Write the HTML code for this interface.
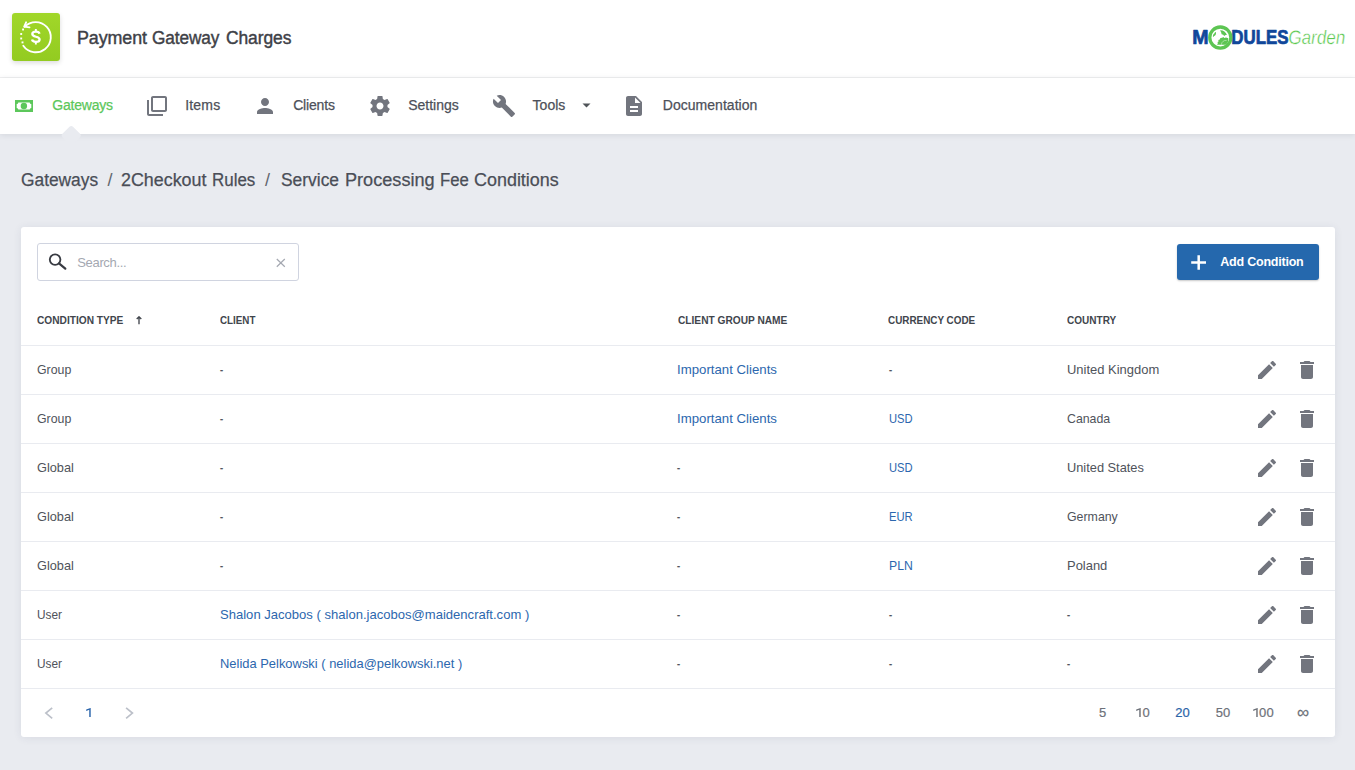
<!DOCTYPE html>
<html>
<head>
<meta charset="utf-8">
<title>Payment Gateway Charges</title>
<style>
*{box-sizing:border-box;margin:0;padding:0}
html,body{width:1355px;height:770px;overflow:hidden}
body{background:#e9ebf0;font-family:"Liberation Sans",sans-serif;color:#505459;position:relative;font-size:13px}
.abs{position:absolute;white-space:nowrap}
#header{position:absolute;left:0;top:0;width:1355px;height:78px;background:#fff;border-bottom:1px solid #f0f0f1}
#logo{position:absolute;left:12px;top:13px;width:48px;height:48px;border-radius:3px;background:linear-gradient(#a1d729,#93cb21);box-shadow:0 2px 5px rgba(0,0,0,.14)}
.tt{top:27px;font-size:18px;color:#3e4147;line-height:22px;letter-spacing:-0.1px;-webkit-text-stroke:0.42px #3e4147;transform-origin:0 50%}
#nav{position:absolute;left:0;top:78px;width:1355px;height:56px;background:#fff;box-shadow:0 1px 6px rgba(30,35,60,.10)}
.nv{position:absolute;top:96px;font-size:14px;line-height:18px;color:#4d5059;white-space:nowrap;-webkit-text-stroke:0.25px currentColor}
.nv.act{color:#5cc75b}
.ico{position:absolute}
#tri{position:absolute;left:63.750px;top:127.750px;width:14.500px;height:14.500px;background:#e9ebf0;border-radius:2.500px;transform:rotate(45deg)}
#clip{position:absolute;left:0;top:78px;width:1355px;height:70px;overflow:hidden;pointer-events:none}
.cr{transform-origin:0 50%;top:168px;font-size:18px;line-height:24px;color:#4a4e57;-webkit-text-stroke:0.25px currentColor}
.cr.sep{color:#62666e;-webkit-text-stroke:0}
#card{position:absolute;left:20px;top:227px;width:1315px;height:510px}
#cbg{position:absolute;left:0.800px;top:0;width:1314.200px;height:510px;background:#fff;border-radius:3px;box-shadow:0 1px 8px rgba(45,55,90,.085)}
.ln{position:absolute;left:1px;width:1314px;height:1px;background:#e9ebf0}
#search{position:absolute;left:17px;top:16px;width:262px;height:38px;border:1px solid #d0d4e0;border-radius:3px;background:#fff}
#search .ph{position:absolute;left:39.300px;top:10.500px;font-size:13px;line-height:16px;color:#a4a8b1;letter-spacing:-0.35px}
#btn{position:absolute;left:1157px;top:17px;width:142px;height:36px;background:#2568ad;border-radius:3px;box-shadow:0 1px 2px rgba(0,0,0,.22);color:#fff;font-weight:bold;font-size:12.500px}
#btn span{position:absolute;left:43.300px;top:11px;line-height:15px;letter-spacing:-0.22px}
.th{position:absolute;top:86px;font-size:10.5px;line-height:14px;font-weight:bold;color:#41454c;white-space:nowrap;transform-origin:0 50%}
.row{position:absolute;left:0;width:1315px;height:49px}
.row div{position:absolute;top:17px;font-size:13px;line-height:16px;color:#4f535b;white-space:nowrap;transform-origin:0 50%}
.row div.lk{color:#2c67ae}
.row div.ds{-webkit-text-stroke:0.35px currentColor}
.c1{left:17.300px}.c2{left:199.700px}.c3{left:657.200px}.c4{left:868.600px}.c5{left:1047.200px}
#foot{position:absolute;left:0;top:461px;width:1315px;height:49px}
#foot div{position:absolute;top:17px;font-size:13px;line-height:16px;color:#6d7179;-webkit-text-stroke:0.2px currentColor;white-space:nowrap;text-align:center}
#foot div.on{color:#2a64a8}
</style>
</head>
<body>
<div id="header">
  <div id="logo">
    <svg width="48" height="48" viewBox="0 0 48 48">
      <path d="M12.66 13.85 A15.1 15.1 0 1 1 11.29 32.75" fill="none" stroke="#fff" stroke-width="1.85" stroke-linecap="round"/>
      <rect x="10.11" y="15.55" width="1.9" height="1.9" fill="#fff"/><rect x="8.25" y="20.05" width="1.9" height="1.9" fill="#fff"/><rect x="8.25" y="24.55" width="1.9" height="1.9" fill="#fff"/><rect x="9.55" y="28.45" width="1.9" height="1.9" fill="#fff"/>
      <path d="M14.1 9.3 L12.2 13.6 L17.5 14.4" fill="none" stroke="#fff" stroke-width="1.85" stroke-linecap="round" stroke-linejoin="round"/>
      <path d="M27.5 20.700 C27.200 19.300 25.800 18.600 23.900 18.600 C21.800 18.600 20.300 19.600 20.300 21.100 C20.300 22.600 21.600 23.200 23.900 23.750 C26.400 24.300 27.600 25 27.600 26.450 C27.600 27.950 26.100 28.850 23.900 28.850 C21.800 28.850 20.350 28 20.050 26.600" fill="none" stroke="#fff" stroke-width="2.3"/><path d="M23.85 15.900 V18.600 M23.85 28.900 V31.600" stroke="#fff" stroke-width="1.9"/>
    </svg>
  </div>
  <div id="w_t1" class="abs tt" style="left:76.600px;transform:scaleX(0.9930)">Payment</div><div id="w_t2" class="abs tt" style="left:152.200px;transform:scaleX(0.9560)">Gateway</div><div id="w_t3" class="abs tt" style="left:225.800px;transform:scaleX(0.9692)">Charges</div>
  <svg class="ico" style="left:1190px;top:22px" width="160" height="32" viewBox="0 0 160 32">
    <defs><clipPath id="gc"><circle cx="30.300" cy="15.550" r="9"/></clipPath></defs>
    <g font-family="Liberation Sans, sans-serif" font-weight="bold" font-size="19.300" fill="#10479a" stroke="#10479a" stroke-width="0.700" stroke-linejoin="round">
      <text x="2.300" y="22" textLength="16.300" lengthAdjust="spacingAndGlyphs">M</text>
      <text x="41.300" y="22" textLength="57.200" lengthAdjust="spacingAndGlyphs">DULES</text>
    </g>
    <circle cx="30.300" cy="15.550" r="10.550" fill="#fff" stroke="#5dc553" stroke-width="3.300"/>
    <g clip-path="url(#gc)" fill="#5dc553">
      <path d="M25.200 9.900 L26.100 10.600 L25.800 12.600 L25.100 13.600 L24.200 14 L23.400 15 L22.800 14.200 L23.300 12.400 L24.300 11.600z"/>
      <path d="M30.100 8.200 L32.600 8.400 L34.400 9.600 L36 11.200 L36.900 12.900 L35.600 13 L34.200 13.900 L33.200 12.800 L31.600 12.200 L31.200 10.400z"/>
      <path d="M30.400 16 L32.200 15.800 L33.300 15 L34.300 16 L36 15.600 L38.300 16.200 L38 22.700 L27 22.700 L27.800 21.400 L27.600 20 L28.600 19.400 L28.300 18 L29.800 17.600z"/>
      <path d="M31.400 22.700 A4.300 4.300 0 0 1 36.600 18.500" fill="none" stroke="#fff" stroke-width="0.600" opacity=".7"/>
    </g>
    <text x="98.600" y="22" transform="translate(0,22) skewX(1.5) translate(0,-22)" font-family="Liberation Sans, sans-serif" font-style="italic" font-size="19.500" fill="#5ac84e" stroke="#fff" stroke-width="0.400" textLength="56.800" lengthAdjust="spacingAndGlyphs">Garden</text>
  </svg>
</div>
<div id="nav"></div>

<!-- nav icons -->
<svg class="ico" style="left:15px;top:100px" width="18" height="12" viewBox="0 0 18 12"><rect x="0" y="0" width="18" height="12" fill="#5cc75b"/><path d="M3.3 2.4 H14.7 A1.6 1.6 0 0 0 16.3 4 V8 A1.6 1.6 0 0 0 14.7 9.600 H3.3 A1.6 1.6 0 0 0 1.7 8 V4 A1.6 1.6 0 0 0 3.3 2.4z" fill="#fff"/><circle cx="8.9" cy="6" r="3.200" fill="#5cc75b"/></svg>
<div class="nv act" style="left:52.3px;letter-spacing:-0.22px">Gateways</div>
<div id="tri"></div>

<svg class="ico" style="left:145px;top:94px" width="24" height="24" viewBox="0 0 24 24"><path d="M4 6H2v14c0 1.1.9 2 2 2h14v-2H4V6zm16-4H8c-1.1 0-2 .9-2 2v12c0 1.1.9 2 2 2h12c1.100 0 2-.9 2-2V4c0-1.100-.9-2-2-2zm0 14H8V4h12v12z" fill="#72757e"/></svg>
<div class="nv" style="left:185.2px;letter-spacing:0.18px">Items</div>

<svg class="ico" style="left:252.600px;top:94px" width="24" height="24" viewBox="0 0 24 24"><path d="M12 12c2.210 0 4-1.790 4-4s-1.790-4-4-4-4 1.790-4 4 1.790 4 4 4zm0 2c-2.670 0-8 1.340-8 4v2h16v-2c0-2.660-5.330-4-8-4z" fill="#72757e"/></svg>
<div class="nv" style="left:293.2px;letter-spacing:-0.18px">Clients</div>

<svg class="ico" style="left:368px;top:94px" width="24" height="24" viewBox="0 0 24 24"><path d="M19.430 12.980c.040-.320.070-.640.070-.980s-.030-.660-.070-.980l2.110-1.650c.190-.150.240-.420.120-.640l-2-3.460c-.120-.220-.390-.300-.610-.220l-2.490 1c-.520-.400-1.080-.730-1.690-.980l-.380-2.650C14.460 2.180 14.250 2 14 2h-4c-.250 0-.460.180-.490.420l-.380 2.650c-.610.250-1.170.590-1.690.980l-2.490-1c-.230-.090-.490 0-.610.220l-2 3.460c-.130.220-.070.490.12.640l2.110 1.650c-.040.320-.070.650-.070.980s.030.660.070.980l-2.110 1.650c-.190.150-.240.420-.12.640l2 3.460c.120.220.390.300.610.220l2.490-1c.520.400 1.080.730 1.690.980l.380 2.650c.030.240.240.420.490.420h4c.250 0 .460-.180.490-.420l.380-2.650c.610-.250 1.170-.590 1.690-.980l2.490 1c.230.090.490 0 .610-.220l2-3.460c.120-.220.070-.490-.12-.640l-2.110-1.650zM12 15.500c-1.930 0-3.500-1.570-3.500-3.500s1.570-3.500 3.500-3.500 3.500 1.570 3.500 3.500-1.570 3.500-3.500 3.500z" fill="#72757e"/></svg>
<div class="nv" style="left:408.2px">Settings</div>

<svg class="ico" style="left:492px;top:94px" width="24" height="24" viewBox="0 0 24 24"><path d="M22.700 19l-9.100-9.100c.9-2.300.4-5-1.500-6.900-2-2-5-2.400-7.400-1.300L9 6 6 9 1.600 4.700C.4 7.100.9 10.100 2.900 12.100c1.900 1.900 4.600 2.400 6.900 1.500l9.100 9.100c.4.400 1 .4 1.400 0l2.300-2.300c.5-.4.500-1.100.1-1.400z" fill="#72757e"/></svg>
<div class="nv" style="left:532.6px">Tools</div>
<svg class="ico" style="left:582px;top:103px" width="9" height="5" viewBox="0 0 9 5"><path d="M0.500 0.500h8L4.500 4.500z" fill="#505459"/></svg>

<svg class="ico" style="left:622px;top:94px" width="24" height="24" viewBox="0 0 24 24"><path d="M14 2H6c-1.100 0-1.990.9-1.990 2L4 20c0 1.100.890 2 1.990 2H18c1.100 0 2-.9 2-2V8l-6-6zm2 16H8v-2h8v2zm0-4H8v-2h8v2zm-3-5V3.500L18.500 9H13z" fill="#72757e"/></svg>
<div class="nv" style="left:662.8px;letter-spacing:0.03px">Documentation</div>

<div id="w_b1" class="abs cr" style="left:20.520px;transform:scaleX(0.9635)">Gateways</div><div class="abs cr sep" style="left:107.500px">/</div><div id="w_b2" class="abs cr" style="left:120.750px;transform:scaleX(0.9932)">2Checkout</div><div id="w_b3" class="abs cr" style="left:212.300px;transform:scaleX(0.9400)">Rules</div><div class="abs cr sep" style="left:265px">/</div><div id="w_b4" class="abs cr" style="left:281.200px;transform:scaleX(0.9668)">Service</div><div id="w_b5" class="abs cr" style="left:344.900px;transform:scaleX(1.0069)">Processing</div><div id="w_b6" class="abs cr" style="left:439.700px;transform:scaleX(0.9300)">Fee</div><div id="w_b7" class="abs cr" style="left:474.200px;transform:scaleX(0.9965)">Conditions</div>

<div id="card">
  <div id="cbg"></div>
  <div class="ln" style="top:118px"></div><div class="ln" style="top:167px"></div><div class="ln" style="top:216px"></div><div class="ln" style="top:265px"></div><div class="ln" style="top:314px"></div><div class="ln" style="top:363px"></div><div class="ln" style="top:412px"></div><div class="ln" style="top:461px"></div>
  <div id="search">
    <svg class="ico" style="left:10px;top:8px" width="20" height="20" viewBox="0 0 20 20"><circle cx="7.100" cy="7.600" r="5.300" fill="none" stroke="#383b42" stroke-width="1.850"/><path d="M11 11.400L17.300 16.700" stroke="#383b42" stroke-width="2.200" stroke-linecap="round"/></svg>
    <div class="ph">Search...</div>
    <svg class="ico" style="left:238px;top:13.500px" width="10" height="10" viewBox="0 0 10 10"><path d="M0.800 1L8.800 8.800M8.800 1L0.800 8.800" stroke="#a4a8b1" stroke-width="1.200"/></svg>
  </div>
  <div id="btn">
    <svg class="ico" style="left:14px;top:10.500px" width="15.400" height="15" viewBox="0 0 15.400 15"><path d="M7.700 0.300v14.400M0.200 7.500h15" stroke="#fff" stroke-width="2.500"/></svg>
    <span>Add Condition</span>
  </div>
  <div class="th" style="left:17.400px;transform:scaleX(.968)">CONDITION TYPE</div>
  <svg class="ico" style="left:116.400px;top:88.800px" width="7" height="9" viewBox="0 0 7 9"><path d="M3 0.700v7.500M0.700 3.100L3 0.800 5.300 3.100" fill="none" stroke="#41454c" stroke-width="1.350"/></svg>
  <div class="th" style="left:199.800px;transform:scaleX(.935)">CLIENT</div>
  <div class="th" style="left:657.700px;transform:scaleX(.968)">CLIENT GROUP NAME</div>
  <div class="th" style="left:868.300px;transform:scaleX(.942)">CURRENCY CODE</div>
  <div class="th" style="left:1047.200px;transform:scaleX(.955)">COUNTRY</div>
  <div class="row" style="top:118px"><div class="c1" style="transform:scaleX(0.95)">Group</div><div class="c2 ds" style="transform:scaleX(0.72)">-</div><div class="c3 lk" style="transform:scaleX(1.017)">Important Clients</div><div class="c4 ds" style="transform:scaleX(0.72)">-</div><div class="c5" style="transform:scaleX(0.997)">United Kingdom</div><svg class="ico" style="left:1235px;top:13px" width="24" height="24" viewBox="0 0 24 24"><path d="M3 17.250V21h3.750L17.810 9.940l-3.750-3.750L3 17.250zM20.710 7.040c.390-.390.390-1.020 0-1.410l-2.340-2.340c-.390-.390-1.020-.390-1.410 0l-1.830 1.830 3.750 3.750 1.830-1.830z" fill="#72757e"/></svg><svg class="ico" style="left:1275px;top:13px" width="24" height="24" viewBox="0 0 24 24"><path d="M6 19c0 1.100.9 2 2 2h8c1.100 0 2-.9 2-2V7H6v12zM19 4h-3.500l-1-1h-5l-1 1H5v2h14V4z" fill="#72757e"/></svg></div>
  <div class="row" style="top:167px"><div class="c1" style="transform:scaleX(0.95)">Group</div><div class="c2 ds" style="transform:scaleX(0.72)">-</div><div class="c3 lk" style="transform:scaleX(1.017)">Important Clients</div><div class="c4 lk" style="transform:scaleX(0.86)">USD</div><div class="c5" style="transform:scaleX(0.948)">Canada</div><svg class="ico" style="left:1235px;top:13px" width="24" height="24" viewBox="0 0 24 24"><path d="M3 17.250V21h3.750L17.810 9.940l-3.750-3.750L3 17.250zM20.710 7.040c.390-.390.390-1.020 0-1.410l-2.340-2.340c-.390-.390-1.020-.390-1.410 0l-1.830 1.830 3.750 3.750 1.830-1.830z" fill="#72757e"/></svg><svg class="ico" style="left:1275px;top:13px" width="24" height="24" viewBox="0 0 24 24"><path d="M6 19c0 1.100.9 2 2 2h8c1.100 0 2-.9 2-2V7H6v12zM19 4h-3.500l-1-1h-5l-1 1H5v2h14V4z" fill="#72757e"/></svg></div>
  <div class="row" style="top:216px"><div class="c1" style="transform:scaleX(0.98)">Global</div><div class="c2 ds" style="transform:scaleX(0.72)">-</div><div class="c3 ds" style="transform:scaleX(0.72)">-</div><div class="c4 lk" style="transform:scaleX(0.86)">USD</div><div class="c5" style="transform:scaleX(0.985)">United States</div><svg class="ico" style="left:1235px;top:13px" width="24" height="24" viewBox="0 0 24 24"><path d="M3 17.250V21h3.750L17.810 9.940l-3.750-3.750L3 17.250zM20.710 7.040c.390-.390.390-1.020 0-1.410l-2.340-2.340c-.390-.390-1.020-.390-1.410 0l-1.830 1.830 3.750 3.750 1.830-1.830z" fill="#72757e"/></svg><svg class="ico" style="left:1275px;top:13px" width="24" height="24" viewBox="0 0 24 24"><path d="M6 19c0 1.100.9 2 2 2h8c1.100 0 2-.9 2-2V7H6v12zM19 4h-3.500l-1-1h-5l-1 1H5v2h14V4z" fill="#72757e"/></svg></div>
  <div class="row" style="top:265px"><div class="c1" style="transform:scaleX(0.98)">Global</div><div class="c2 ds" style="transform:scaleX(0.72)">-</div><div class="c3 ds" style="transform:scaleX(0.72)">-</div><div class="c4 lk" style="transform:scaleX(0.863)">EUR</div><div class="c5" style="transform:scaleX(0.95)">Germany</div><svg class="ico" style="left:1235px;top:13px" width="24" height="24" viewBox="0 0 24 24"><path d="M3 17.250V21h3.750L17.810 9.940l-3.750-3.750L3 17.250zM20.710 7.040c.390-.390.390-1.020 0-1.410l-2.340-2.340c-.390-.390-1.020-.390-1.410 0l-1.830 1.830 3.750 3.750 1.830-1.830z" fill="#72757e"/></svg><svg class="ico" style="left:1275px;top:13px" width="24" height="24" viewBox="0 0 24 24"><path d="M6 19c0 1.100.9 2 2 2h8c1.100 0 2-.9 2-2V7H6v12zM19 4h-3.500l-1-1h-5l-1 1H5v2h14V4z" fill="#72757e"/></svg></div>
  <div class="row" style="top:314px"><div class="c1" style="transform:scaleX(0.98)">Global</div><div class="c2 ds" style="transform:scaleX(0.72)">-</div><div class="c3 ds" style="transform:scaleX(0.72)">-</div><div class="c4 lk" style="transform:scaleX(0.94)">PLN</div><div class="c5" style="transform:scaleX(0.995)">Poland</div><svg class="ico" style="left:1235px;top:13px" width="24" height="24" viewBox="0 0 24 24"><path d="M3 17.250V21h3.750L17.810 9.940l-3.750-3.750L3 17.250zM20.710 7.040c.390-.390.390-1.020 0-1.410l-2.340-2.340c-.390-.390-1.020-.390-1.410 0l-1.830 1.830 3.750 3.750 1.830-1.830z" fill="#72757e"/></svg><svg class="ico" style="left:1275px;top:13px" width="24" height="24" viewBox="0 0 24 24"><path d="M6 19c0 1.100.9 2 2 2h8c1.100 0 2-.9 2-2V7H6v12zM19 4h-3.500l-1-1h-5l-1 1H5v2h14V4z" fill="#72757e"/></svg></div>
  <div class="row" style="top:363px"><div class="c1" style="transform:scaleX(0.91)">User</div><div class="c2 lk" style="transform:scaleX(1.004)">Shalon Jacobos ( shalon.jacobos@maidencraft.com )</div><div class="c3 ds" style="transform:scaleX(0.72)">-</div><div class="c4 ds" style="transform:scaleX(0.72)">-</div><div class="c5 ds" style="transform:scaleX(0.72)">-</div><svg class="ico" style="left:1235px;top:13px" width="24" height="24" viewBox="0 0 24 24"><path d="M3 17.250V21h3.750L17.810 9.940l-3.750-3.750L3 17.250zM20.710 7.040c.390-.390.390-1.020 0-1.410l-2.340-2.340c-.390-.390-1.020-.390-1.410 0l-1.830 1.830 3.750 3.750 1.830-1.830z" fill="#72757e"/></svg><svg class="ico" style="left:1275px;top:13px" width="24" height="24" viewBox="0 0 24 24"><path d="M6 19c0 1.100.9 2 2 2h8c1.100 0 2-.9 2-2V7H6v12zM19 4h-3.500l-1-1h-5l-1 1H5v2h14V4z" fill="#72757e"/></svg></div>
  <div class="row" style="top:412px"><div class="c1" style="transform:scaleX(0.91)">User</div><div class="c2 lk" style="transform:scaleX(0.994)">Nelida Pelkowski ( nelida@pelkowski.net )</div><div class="c3 ds" style="transform:scaleX(0.72)">-</div><div class="c4 ds" style="transform:scaleX(0.72)">-</div><div class="c5 ds" style="transform:scaleX(0.72)">-</div><svg class="ico" style="left:1235px;top:13px" width="24" height="24" viewBox="0 0 24 24"><path d="M3 17.250V21h3.750L17.810 9.940l-3.750-3.750L3 17.250zM20.710 7.040c.390-.390.390-1.020 0-1.410l-2.340-2.340c-.390-.390-1.020-.390-1.410 0l-1.830 1.830 3.750 3.750 1.830-1.830z" fill="#72757e"/></svg><svg class="ico" style="left:1275px;top:13px" width="24" height="24" viewBox="0 0 24 24"><path d="M6 19c0 1.100.9 2 2 2h8c1.100 0 2-.9 2-2V7H6v12zM19 4h-3.500l-1-1h-5l-1 1H5v2h14V4z" fill="#72757e"/></svg></div>
  <div id="foot">
    <svg class="ico" style="left:23px;top:17.800px" width="12" height="14" viewBox="0 0 12 14"><path d="M9.200 1.900L2.900 7.100 9.200 12.300" fill="none" stroke="#bcc0c9" stroke-width="1.700"/></svg>
    <svg class="ico" style="left:66.3px;top:20.100px" width="5" height="9" viewBox="0 0 5 9"><path d="M4.700 0 V9 H3.250 V1.800 L0.200 2.900 V1.600 L4.450 0z" fill="#2a64ab"/></svg>
    <svg class="ico" style="left:103.100px;top:17.800px" width="12" height="14" viewBox="0 0 12 14"><path d="M3.100 1.900L9.400 7.100 3.100 12.300" fill="none" stroke="#bcc0c9" stroke-width="1.700"/></svg>
    <div style="left:1067.500px;width:30px">5</div>
    <svg class="ico" style="left:1116.0px;top:20.100px" width="5" height="9" viewBox="0 0 5 9"><path d="M4.700 0 V9 H3.250 V1.800 L0.200 2.900 V1.600 L4.450 0z" fill="#6d7179"/></svg><div style="left:1122.600px;width:auto">0</div>
    <div class="on" style="left:1147.600px;width:30px">20</div>
    <div style="left:1188px;width:30px">50</div>
    <svg class="ico" style="left:1232.5px;top:20.100px" width="5" height="9" viewBox="0 0 5 9"><path d="M4.700 0 V9 H3.250 V1.800 L0.200 2.900 V1.600 L4.450 0z" fill="#6d7179"/></svg><div style="left:1239.100px;width:auto;letter-spacing:0.15px">00</div>
    <div style="left:1268px;width:30px;font-size:17px;top:17px">&#8734;</div>
  </div>
</div>
</body>
</html>
